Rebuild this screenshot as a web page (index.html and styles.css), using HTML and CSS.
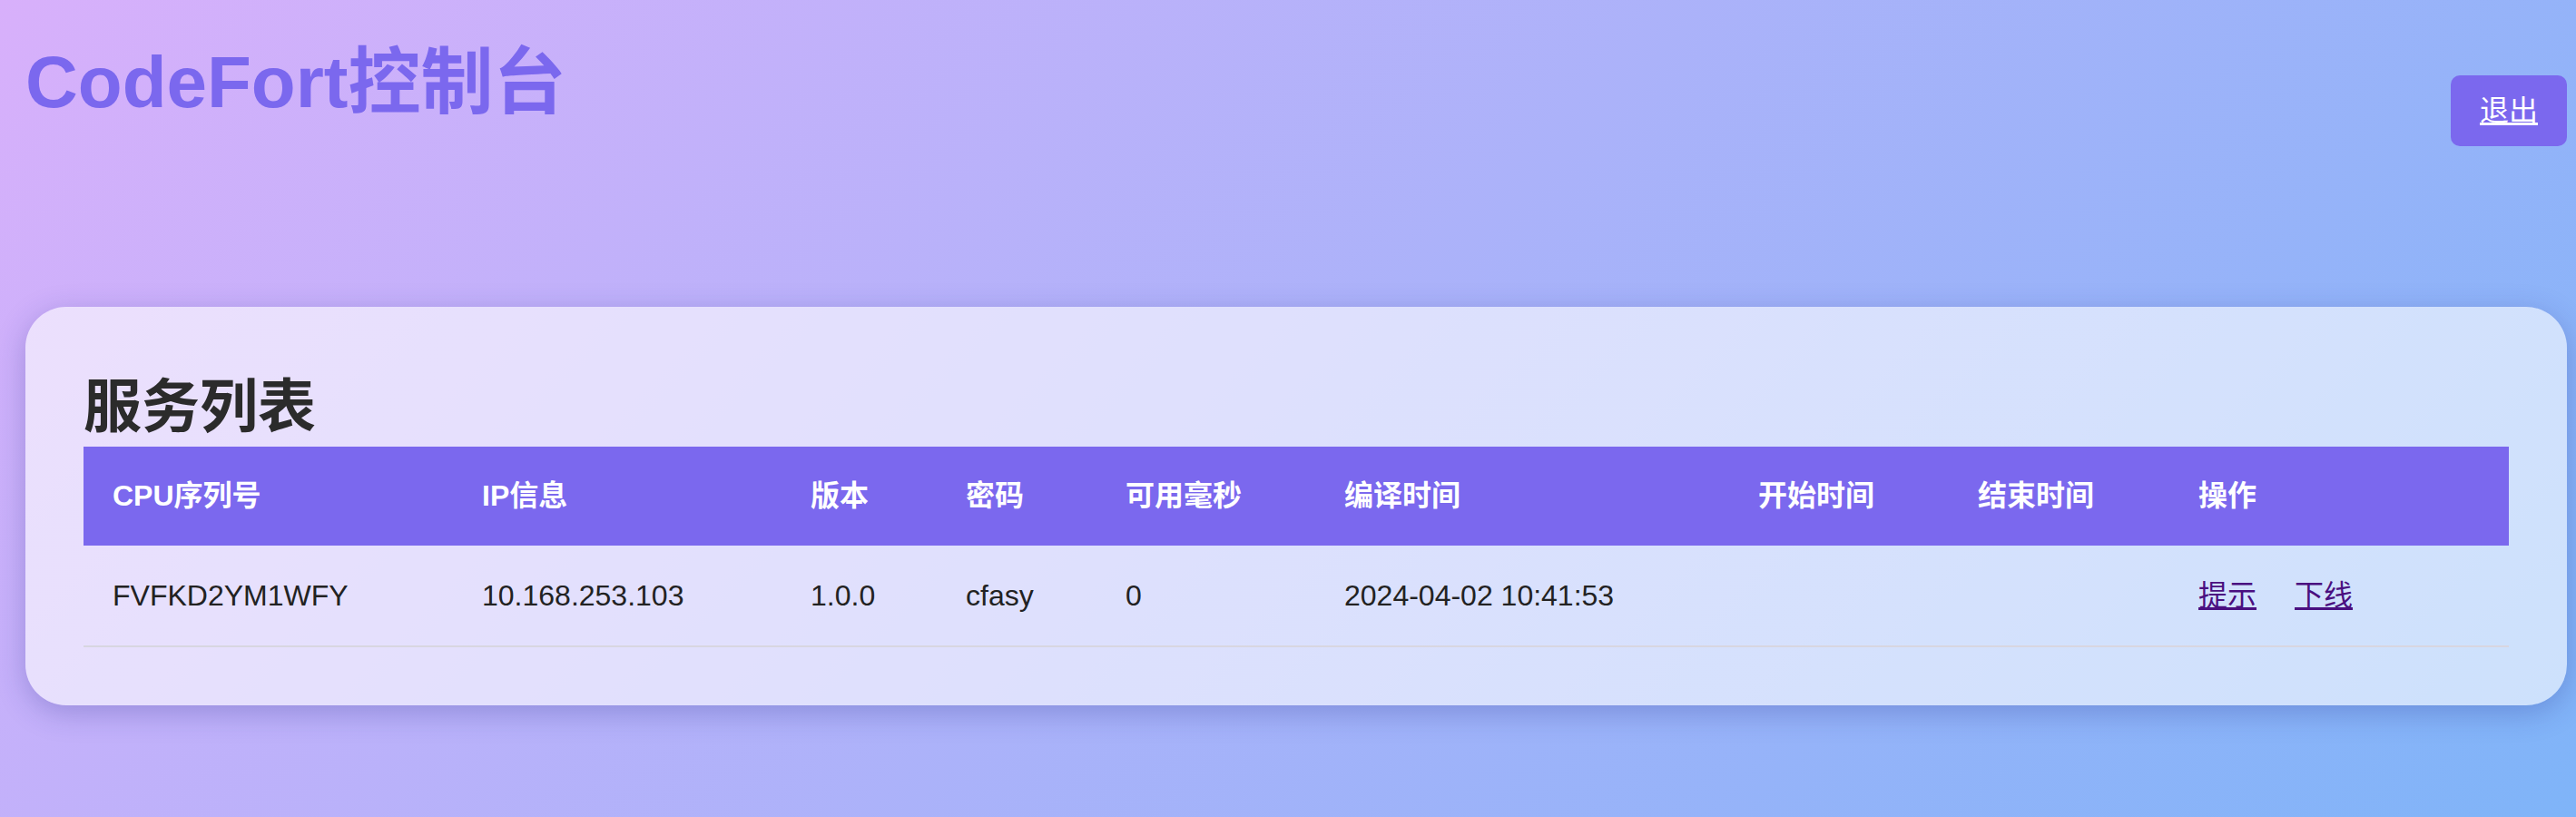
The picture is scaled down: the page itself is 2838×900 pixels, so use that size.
FILE: index.html
```html
<!DOCTYPE html>
<html lang="zh-CN">
<head>
<meta charset="utf-8">
<title>CodeFort控制台</title>
<link rel="stylesheet" href="styles.css">
</head>
<body>
<div class="page">
  <header class="topbar">
    <h1 class="brand">CodeFort控制台</h1>
    <a class="logout" href="#">退出</a>
  </header>
  <main class="card">
    <h2 class="card-title">服务列表</h2>
    <table class="services">
      <colgroup>
        <col class="c-cpu"><col class="c-ip"><col class="c-ver"><col class="c-pwd"><col class="c-ms"><col class="c-build"><col class="c-start"><col class="c-end"><col class="c-ops">
      </colgroup>
      <thead>
        <tr>
          <th>CPU序列号</th>
          <th>IP信息</th>
          <th>版本</th>
          <th>密码</th>
          <th>可用毫秒</th>
          <th>编译时间</th>
          <th>开始时间</th>
          <th>结束时间</th>
          <th>操作</th>
        </tr>
      </thead>
      <tbody>
        <tr>
          <td>FVFKD2YM1WFY</td>
          <td>10.168.253.103</td>
          <td>1.0.0</td>
          <td>cfasy</td>
          <td>0</td>
          <td>2024-04-02 10:41:53</td>
          <td></td>
          <td></td>
          <td><a class="op" href="#">提示</a><a class="op" href="#">下线</a></td>
        </tr>
      </tbody>
    </table>
  </main>
</div>
</body>
</html>
```
FILE: styles.css
```css
html, body {
  margin: 0;
  padding: 0;
}

body {
  font-family: "Liberation Sans", "Noto Sans CJK SC", sans-serif;
  color: #2b2b2b;
}

.page {
  min-height: 100vh;
  box-sizing: border-box;
  padding: 0 10px 40px 28px;
  background: linear-gradient(135deg, #d8b0fb 0%, #7fb4f8 100%);
}

.topbar {
  display: flex;
  justify-content: space-between;
  align-items: flex-start;
}

.brand {
  margin: 41px 0 0 0;
  font-size: 80px;
  line-height: 100px;
  font-weight: 700;
  color: #7b68ee;
}

.logout {
  display: block;
  margin-top: 83px;
  padding: 20px 32px;
  font-size: 32px;
  line-height: 38px;
  color: #ffffff;
  background: #7b68ee;
  border-radius: 10px;
  text-decoration: underline;
}

.card {
  display: block;
  margin-top: 177px;
  padding: 64px;
  border-radius: 45px;
  background: rgba(255, 255, 255, 0.6);
  box-shadow: 0 8px 32px rgba(31, 38, 135, 0.26);
}

.card-title {
  margin: 0;
  padding-top: 3px;
  font-size: 64px;
  line-height: 87px;
  font-weight: 700;
  color: #2b2b2b;
}

.services {
  width: 100%;
  border-collapse: collapse;
  table-layout: fixed;
}

.c-cpu { width: 407px; }
.c-ip { width: 362px; }
.c-ver { width: 171px; }
.c-pwd { width: 176px; }
.c-ms { width: 241px; }
.c-build { width: 456px; }
.c-start { width: 242px; }
.c-end { width: 243px; }
.c-ops { width: 374px; }

.services th {
  padding: 36px 32px;
  font-size: 32px;
  line-height: 37px;
  font-weight: 700;
  text-align: left;
  color: #ffffff;
  background: #7b68ee;
  white-space: nowrap;
}

.services td {
  padding: 36px 32px;
  font-size: 32px;
  line-height: 38px;
  color: #222222;
  border-bottom: 2px solid #d8d6e0;
  white-space: nowrap;
}

.op {
  color: #4a0f80;
  text-decoration: underline;
}

.op + .op {
  margin-left: 42px;
}
```
